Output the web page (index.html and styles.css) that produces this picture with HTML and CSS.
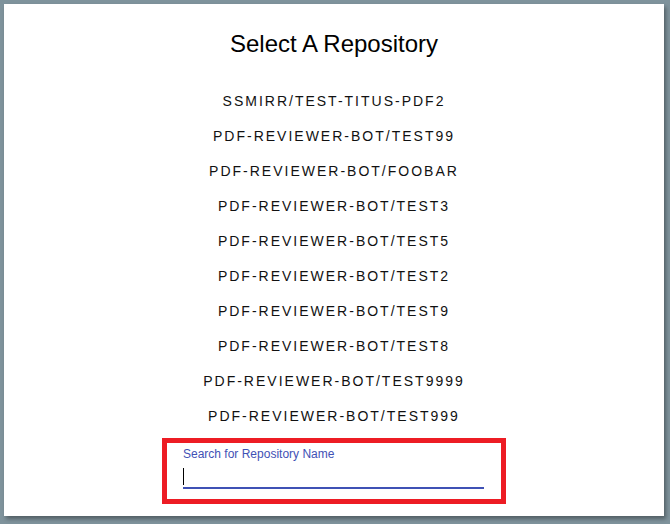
FILE: index.html
```html
<!DOCTYPE html>
<html>
<head>
<meta charset="utf-8">
<link rel="stylesheet" href="styles.css">
</head>
<body>
<div class="card">
  <h1 class="title">Select A Repository</h1>
  <ul class="repos">
    <li>ssmirr/test-titus-pdf2</li>
    <li>pdf-reviewer-bot/test99</li>
    <li>pdf-reviewer-bot/foobar</li>
    <li>pdf-reviewer-bot/test3</li>
    <li>pdf-reviewer-bot/test5</li>
    <li>pdf-reviewer-bot/test2</li>
    <li>pdf-reviewer-bot/test9</li>
    <li>pdf-reviewer-bot/test8</li>
    <li>pdf-reviewer-bot/test9999</li>
    <li>pdf-reviewer-bot/test999</li>
  </ul>
  <div class="search">
    <label class="search-label">Search for Repository Name</label>
    <div class="search-field"><span class="caret"></span></div>
  </div>
</div>
</body>
</html>
```
FILE: styles.css
```css
html, body {
  margin: 0;
  padding: 0;
}
body {
  background: #7f939c;
  padding: 4px;
  font-family: "Liberation Sans", Arial, sans-serif;
  width: 670px;
  height: 524px;
  box-sizing: border-box;
}
.card {
  width: 660px;
  height: 512px;
  background: #fff;
  box-shadow: 2px 3px 4px rgba(0, 0, 0, 0.35);
  display: flex;
  flex-direction: column;
  align-items: center;
  box-sizing: border-box;
  padding-top: 26px;
}
.title {
  margin: 0;
  font-size: 24px;
  font-weight: normal;
  line-height: 28px;
  color: #000;
}
.repos {
  list-style: none;
  margin: 26px 0 0 0;
  padding: 0;
  display: flex;
  flex-direction: column;
  align-items: center;
}
.repos li {
  height: 35px;
  line-height: 35px;
  font-size: 14px;
  letter-spacing: 2px;
  text-transform: uppercase;
  color: #111;
}
.search {
  margin-top: 4px;
  width: 344px;
  height: 66px;
  box-sizing: border-box;
  border: 5px solid #ed1c24;
  padding: 4px 17px 0 16px;
  display: flex;
  flex-direction: column;
}
.search-label {
  font-size: 12px;
  line-height: 14px;
  color: #3f51b5;
}
.search-field {
  margin-top: 6px;
  border-bottom: 2px solid #3f51b5;
  display: flex;
  align-items: flex-end;
  padding-bottom: 2px;
  box-sizing: border-box;
  height: 22px;
}
.caret {
  width: 1px;
  height: 17px;
  background: #000;
}
```
